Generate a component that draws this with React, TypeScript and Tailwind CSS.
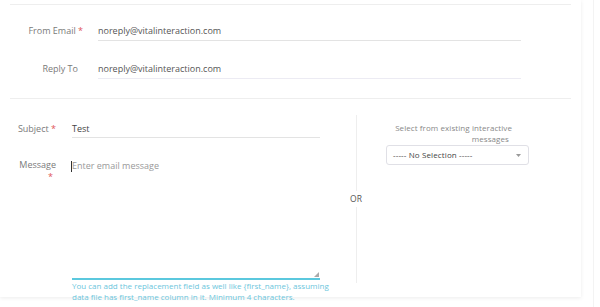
import React from "react";

export default function App() {
  const font = { fontFamily: '"Open Sans", "Noto Sans", sans-serif' };
  return (
    <div className="w-[600px] h-[307px] overflow-hidden bg-white flex" style={font}>
      <div className="w-[581px] h-[297px] bg-white shadow-[0_1px_4px_rgba(0,0,0,0.08)] flex flex-col shrink-0 relative">
        <div className="mx-[10px] mt-[4px] h-px shrink-0 bg-[#eeeeee]" />
        {/* Section 1 */}
        <div className="flex flex-col pt-[18px] shrink-0">
          <div className="flex items-start h-[38px] shrink-0">
            <div className="w-[83px] text-right text-[9px] leading-[14px] text-[#7a7a7a] pt-[1px]">
              From Email <span className="text-[#e05555]">*</span>
            </div>
            <div className="ml-[15px] w-[423px] border-b border-[#e3e3e3] h-[18px] text-[9px] leading-[14px] text-[#555] pt-[1px]">
              noreply@vitalinteraction.com
            </div>
          </div>
          <div className="flex items-start h-[37px] shrink-0">
            <div className="w-[78px] text-right text-[9px] leading-[14px] text-[#7a7a7a] pt-[1px]">
              Reply To
            </div>
            <div className="ml-[20px] w-[423px] border-b border-[#ecebf3] h-[18px] text-[9px] leading-[14px] text-[#555] pt-[1px]">
              noreply@vitalinteraction.com
            </div>
          </div>
        </div>
        <div className="mx-[10px] h-px shrink-0 bg-[#eeeeee]" />
        {/* Section 2 */}
        <div className="flex flex-1 pt-[16px]">
          <div className="w-[330px] flex flex-col">
            <div className="flex items-start h-[41px] pt-[6px] shrink-0">
              <div className="w-[56px] text-right text-[9px] leading-[14px] text-[#7a7a7a] pt-[1px]">
                Subject <span className="text-[#e05555]">*</span>
              </div>
              <div className="ml-[16px] w-[248px] border-b border-[#e3e3e3] h-[17px] text-[9px] leading-[14px] text-[#444] pt-[1px]">
                Test
              </div>
            </div>
            <div className="flex items-start shrink-0">
              <div className="w-[56px] flex flex-col items-end text-[9px] leading-[12px] text-[#7a7a7a] pt-[3px]">
                <span>Message</span>
                <span className="text-[#e05555] pr-[3px]">*</span>
              </div>
              <div className="ml-[16px] w-[248px] flex flex-col">
                <div className="h-[124px] border-b-2 border-[#5bc8de] relative text-[9px] leading-[14px] text-[#999] pt-[3px]">
                  <span className="inline-block w-px h-[11px] bg-[#333] align-middle -ml-[1px]" />
                  Enter email message
                  <svg className="absolute right-[1px] bottom-[1px]" width="5" height="5" viewBox="0 0 5 5">
                    <path d="M5 0 L5 5 L0 5 Z" fill="#aaa" />
                  </svg>
                </div>
                <div className="text-[8px] leading-[11px] text-[#6cc6dc] pt-0 whitespace-nowrap">
                  You can add the replacement field as well like {"{first_name}"}, assuming
                  <br />
                  data file has first_name column in it. Minimum 4 characters.
                </div>
              </div>
            </div>
          </div>
          <div className="w-[14px] ml-[19px] flex flex-col items-center">
            <div className="w-px h-[76px] shrink-0 bg-[#eeeeee]" />
            <div className="text-[8.5px] leading-[14px] text-[#555] my-[1px]">OR</div>
            <div className="w-px h-[76px] shrink-0 bg-[#eeeeee]" />
          </div>
          <div className="ml-[23px] w-[143px] flex flex-col pt-[7px]">
            <div className="text-[8px] tracking-[0.08px] leading-[11px] text-[#888] text-right pr-[17px] whitespace-nowrap">
              Select from existing interactive
              <br />
              <span className="pr-[3px]">messages</span>
            </div>
            <div className="mt-[1px] h-[20px] shrink-0 border border-[#e0e0e6] rounded-[3px] flex items-center justify-between pl-[6px] pr-[7px]">
              <span className="text-[8px] tracking-[0.12px] text-[#444]">----- No Selection -----</span>
              <svg width="5" height="3" viewBox="0 0 5 3">
                <path d="M0 0 L5 0 L2.5 3 Z" fill="#999" />
              </svg>
            </div>
          </div>
        </div>
      </div>
      <div className="w-[12px]" />
      <div className="w-px h-full bg-[#f3f3f3]" />
    </div>
  );
}
